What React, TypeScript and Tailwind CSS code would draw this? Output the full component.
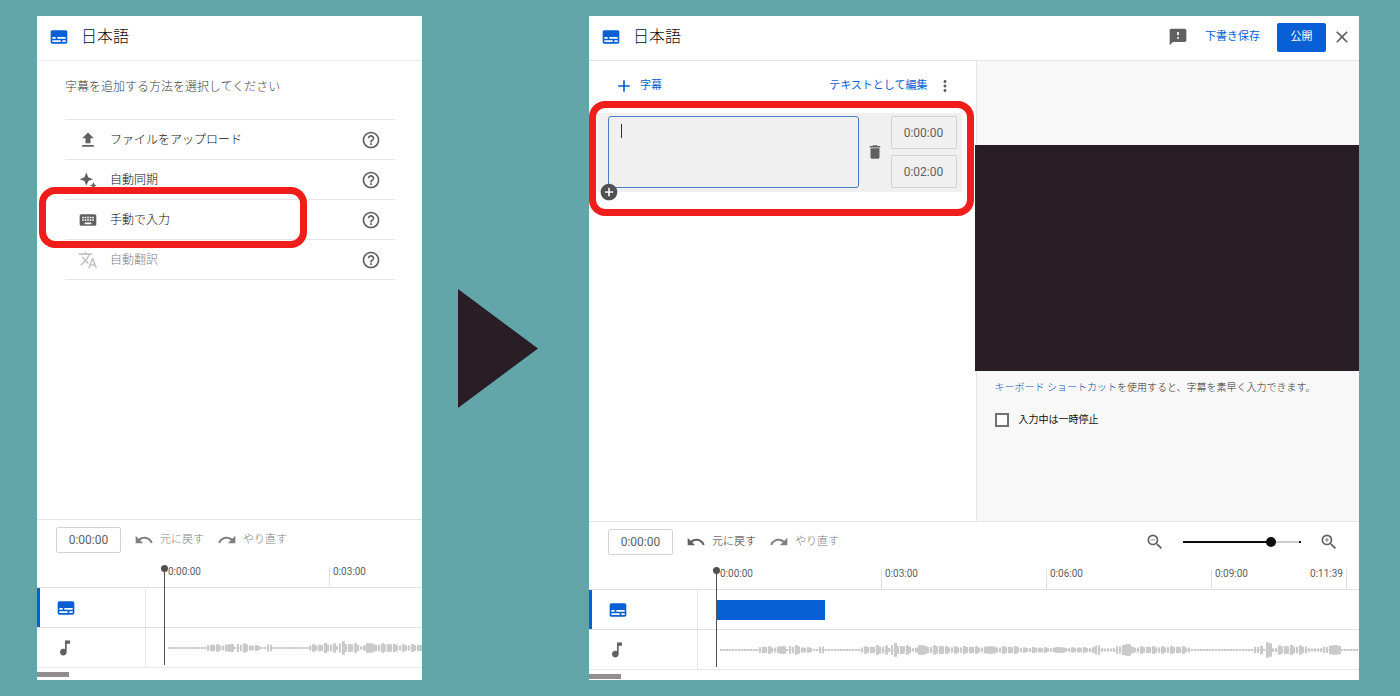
import React from 'react';
import {
  MdAdd,
  MdAddCircle,
  MdClose,
  MdDelete,
  MdFeedback,
  MdFileUpload,
  MdHelpOutline,
  MdKeyboard,
  MdMoreVert,
  MdMusicNote,
  MdRedo,
  MdSubtitles,
  MdTranslate,
  MdUndo,
  MdZoomIn,
  MdZoomOut,
} from 'react-icons/md';

// [end x, half height] of each stretch of the audio track
const envelope: [number, number][] = [
  [38, 1], [64, 4], [69, 1], [72, 7], [79, 5], [93, 3], [97, 1], [105, 5], [116, 1],
  [141, 1], [156, 4], [166, 5], [170, 3], [177, 7], [190, 5], [196, 3], [225, 5],
  [300, 4], [373, 3], [379, 7], [396, 2], [411, 6], [434, 4], [471, 4], [511, 1],
  [532, 1], [541, 5], [546, 1], [550, 8], [556, 3], [588, 5], [602, 2], [620, 5], [640, 1],
];

const bars = Array.from({ length: 213 }, (_, i) => {
  const x = i * 3;
  const max = (envelope.find(([end]) => x < end) || [0, 1])[1];
  const wobble = ((i * i * 31 + i * 17) % 23) / 23;
  return {
    x,
    half: max <= 1 ? 1 : Math.max(1, max * (0.6 + 0.4 * wobble)),
    width: max > 2 && wobble > 0.4 ? 3 : 2,
  };
});

function Waveform() {
  return (
    <svg width="640" height="16" viewBox="0 0 640 16" className="shrink-0" aria-hidden="true">
      <rect x="0" y="7.5" width="638" height="1" fill="#d4d4d4" />
      {bars.map((bar) => (
        <rect key={bar.x} x={bar.x} y={8 - bar.half} width={bar.width} height={bar.half * 2} fill="#cacaca" />
      ))}
    </svg>
  );
}

function SparkleIcon({ className }: { className?: string }) {
  return (
    <svg viewBox="0 0 24 24" fill="currentColor" className={className} aria-hidden="true">
      <path d="M10 3l2.300 5.700L18 11l-5.700 2.300L10 19l-2.300-5.700L2 11l5.700-2.300z" />
      <path d="M18.500 14.500l1.200 2.800 2.800 1.200-2.800 1.200-1.200 2.800-1.200-2.800-2.800-1.200 2.800-1.200z" />
    </svg>
  );
}

const methods = [
  { label: 'ファイルをアップロード', icon: MdFileUpload },
  { label: '自動同期', icon: SparkleIcon },
  { label: '手動で入力', icon: MdKeyboard, highlighted: true },
  { label: '自動翻訳', icon: MdTranslate, disabled: true },
];

function PanelTitle() {
  return (
    <div className="flex items-center gap-3">
      <MdSubtitles className="size-5 text-[#065fd4]" />
      <h2 className="text-base font-light text-[#0d0d0d]">日本語</h2>
    </div>
  );
}

type TimelineProps = {
  marks: string[];
  end?: string;
  canUndo?: boolean;
  clip?: boolean;
  zoom?: boolean;
  footer: string;
};

function Timeline({ marks, end, canUndo, clip, zoom, footer }: TimelineProps) {
  return (
    <div className="border-t border-[#e5e5e5] overflow-hidden">
      <div className="flex items-center h-10 pl-[19px] pr-5">
        <input
          aria-label="再生位置"
          defaultValue="0:00:00"
          className="w-[65px] h-[26px] rounded-xs border border-[#d3d3d3] text-center text-xs text-[#606060]"
        />
        <button
          className={`ml-[13px] flex items-center gap-1.5 text-[11px] font-light ${canUndo ? 'text-[#303030]' : 'text-[#808080]'}`}
        >
          <MdUndo className={`size-5 ${canUndo ? 'text-[#606060]' : 'text-[#808080]'}`} />
          元に戻す
        </button>
        <button className="ml-[13px] flex items-center gap-1.5 text-[11px] font-light text-[#808080]">
          <MdRedo className="size-5" />
          やり直す
        </button>
        {zoom && (
          <div className="ml-auto flex items-center text-[#606060]">
            <button aria-label="縮小">
              <MdZoomOut className="size-5" />
            </button>
            <input
              type="range"
              min="0"
              max="100"
              defaultValue="77"
              aria-label="ズーム"
              className="ml-[18px] mr-[18px] w-[118px] h-2.5 appearance-none bg-[linear-gradient(90deg,#0d0d0d_75%,#cccccc_75%_98%,#0d0d0d_98%)] bg-[length:100%_2px] bg-center bg-no-repeat [&::-webkit-slider-thumb]:appearance-none [&::-webkit-slider-thumb]:size-2.5 [&::-webkit-slider-thumb]:rounded-full [&::-webkit-slider-thumb]:bg-[#0d0d0d]"
            />
            <button aria-label="拡大">
              <MdZoomIn className="size-5" />
            </button>
          </div>
        )}
      </div>

      <div className="relative">
        <div className="flex h-7 items-end border-b border-[#e0e0e0] pl-[127px] text-[10px] leading-none text-[#606060]">
          {marks.map((mark, i) => (
            <div
              key={mark}
              className={`flex h-5 shrink-0 justify-between border-l px-[3px] ${i === 0 ? 'border-transparent' : 'border-[#e0e0e0]'} ${end && i === marks.length - 1 ? 'w-[136px] border-r' : 'w-[165px]'}`}
            >
              <span>{mark}</span>
              {end && i === marks.length - 1 && <span>{end}</span>}
            </div>
          ))}
        </div>
        <div className="flex h-10 border-b border-[#e0e0e0]">
          <div className="flex w-[109px] shrink-0 items-center border-l-3 border-r border-l-[#065fd4] border-r-[#e8e8e8] pl-4">
            <MdSubtitles className="size-5 text-[#065fd4]" />
          </div>
          <div className="flex items-center pl-[18px]">
            {clip && <div className="h-5 w-[109px] bg-[#065fd4]" />}
          </div>
        </div>
        <div className="flex h-10 border-b border-[#e8e8e8]">
          <div className="flex w-[109px] shrink-0 items-center border-r border-[#e8e8e8] pl-[18px]">
            <MdMusicNote className="size-5 text-[#606060]" />
          </div>
          <div className="flex min-w-0 flex-1 items-center overflow-hidden pl-[22px]">
            <Waveform />
          </div>
        </div>
        {/* playhead */}
        <div className="absolute top-2 bottom-[3px] left-[127px] w-px bg-[#505050]">
          <div className="absolute -left-[3px] -top-[3px] size-[7px] rounded-full bg-[#505050]" />
        </div>
      </div>

      <div className={`pt-1 ${footer}`}>
        <div className="h-[5px] w-8 bg-[#918d91]" />
      </div>
    </div>
  );
}

function MethodPanel() {
  return (
    <section className="flex flex-col bg-white min-w-0">
      <header className="flex items-center h-[45px] border-b border-[#ebebeb] pl-3 pb-0.5">
        <PanelTitle />
      </header>
      <div className="flex-1 pl-7 pr-[27px] pt-4">
        <p className="text-xs leading-5 font-light text-[#404040]">字幕を追加する方法を選択してください</p>
        <ul className="mt-[22px] border-t border-[#e5e5e5]">
          {methods.map(({ label, icon: Icon, highlighted, disabled }) => (
            <li
              key={label}
              className="relative flex items-center justify-between h-10 border-b border-[#e5e5e5] pl-[13px] pr-3.5"
            >
              <button
                disabled={disabled}
                className={`flex items-center gap-3 text-xs font-light ${disabled ? 'text-[#808080]' : 'text-[#0d0d0d]'}`}
              >
                <Icon className={`size-5 ${disabled ? 'text-[#c4c4c4]' : 'text-[#606060]'}`} />
                {label}
              </button>
              <button aria-label={`${label}のヘルプ`}>
                <MdHelpOutline className="size-5 text-[#606060]" />
              </button>
              {highlighted && (
                <div className="pointer-events-none absolute -left-[26px] -top-[13px] h-[61px] w-[268px] rounded-2xl border-7 border-[#f01d1b]" />
              )}
            </li>
          ))}
        </ul>
      </div>
      <Timeline marks={['0:00:00', '0:03:00']} footer="h-3" />
    </section>
  );
}

function CaptionEditor() {
  return (
    <div className="flex-[387] min-w-0">
      <div className="flex items-center justify-between pl-[25px] pr-[22px] h-[50px] text-[#065fd4]">
        <button className="flex items-center gap-1.5 text-[11px]">
          <MdAdd className="size-5" />
          字幕
        </button>
        <div className="flex items-center gap-2">
          <button className="text-[11px]">テキストとして編集</button>
          <button aria-label="その他">
            <MdMoreVert className="size-[18px] text-[#606060]" />
          </button>
        </div>
      </div>

      <div className="relative mt-0.5 ml-2 mr-3.5 flex gap-[7px] bg-[#f0f0f0] pt-[3px] pb-1 pl-[11px] pr-[5px]">
        <div className="relative flex flex-1">
          <textarea
            aria-label="字幕"
            className="h-[72px] w-full resize-none rounded-[3px] border border-[#4a7fc8] bg-transparent px-3 py-1.5 text-xs outline-none"
          />
          <span className="absolute left-[13px] top-2 h-3.5 w-px bg-[#303030]" />
          <button aria-label="字幕を追加" className="absolute -bottom-3.5 -left-[9px]">
            <MdAddCircle className="size-5 text-[#505050]" />
          </button>
        </div>
        <button aria-label="削除">
          <MdDelete className="size-[18px] text-[#606060]" />
        </button>
        <div className="flex flex-col justify-between">
          {['0:00:00', '0:02:00'].map((time, i) => (
            <input
              key={time}
              aria-label={i === 0 ? '開始時間' : '終了時間'}
              defaultValue={time}
              className="h-[33px] w-[66px] rounded-xs border border-[#d3d3d3] text-center text-xs text-[#606060]"
            />
          ))}
        </div>
        <div className="pointer-events-none absolute -left-2 -right-3 -top-3 -bottom-6 rounded-2xl border-7 border-[#f01d1b]" />
      </div>
    </div>
  );
}

function Preview() {
  return (
    <div className="flex-[383] min-w-0 border-l border-[#e5e5e5] bg-[#f8f8f8] pt-[84px]">
      <div className="-ml-0.5 aspect-[17/10] bg-[#291d26]" />
      <div className="pl-[18px] pt-[9px]">
        <p className="text-[10px] leading-4 font-light text-[#303030]">
          <a href="#shortcuts" className="text-[#0550b3]">
            キーボード ショートカット
          </a>
          を使用すると、字幕を素早く入力できます。
        </p>
        <label className="mt-4 flex items-center gap-2.5 text-[10px] leading-4 text-[#0d0d0d]">
          <input type="checkbox" className="size-3.5 appearance-none border-2 border-[#707070] bg-white" />
          入力中は一時停止
        </label>
      </div>
    </div>
  );
}

function EditorPanel() {
  return (
    <section className="flex flex-col bg-white min-w-0">
      <header className="flex items-center justify-between h-[45px] border-b border-[#e5e5e5] pl-3 pr-[7px] pb-0.5">
        <PanelTitle />
        <div className="flex items-center gap-[17px] text-[11px]">
          <button aria-label="フィードバック">
            <MdFeedback className="size-5 text-[#606060]" />
          </button>
          <button className="text-[#065fd4]">下書き保存</button>
          <div className="flex items-center gap-1.5">
            <button className="h-[29px] w-[49px] rounded-xs bg-[#065fd4] text-white">公開</button>
            <button aria-label="閉じる">
              <MdClose className="size-5 text-[#606060]" />
            </button>
          </div>
        </div>
      </header>
      <div className="flex flex-1">
        <CaptionEditor />
        <Preview />
      </div>
      <Timeline
        marks={['0:00:00', '0:03:00', '0:06:00', '0:09:00']}
        end="0:11:39"
        canUndo
        clip
        zoom
        footer="h-2.5"
      />
    </section>
  );
}

export default function App() {
  return (
    <main className="grid min-h-screen grid-cols-[385fr_167fr_770fr] bg-[#62a6aa] pl-[37px] pr-[41px] py-4 font-[Roboto,'Noto_Sans_CJK_JP',sans-serif]">
      <MethodPanel />
      <div className="flex items-center justify-center pr-[15px]">
        <svg width="80" height="119" viewBox="0 0 80 119" aria-hidden="true">
          <path d="M0 0L80 59.5L0 119z" fill="#291d26" />
        </svg>
      </div>
      <EditorPanel />
    </main>
  );
}
